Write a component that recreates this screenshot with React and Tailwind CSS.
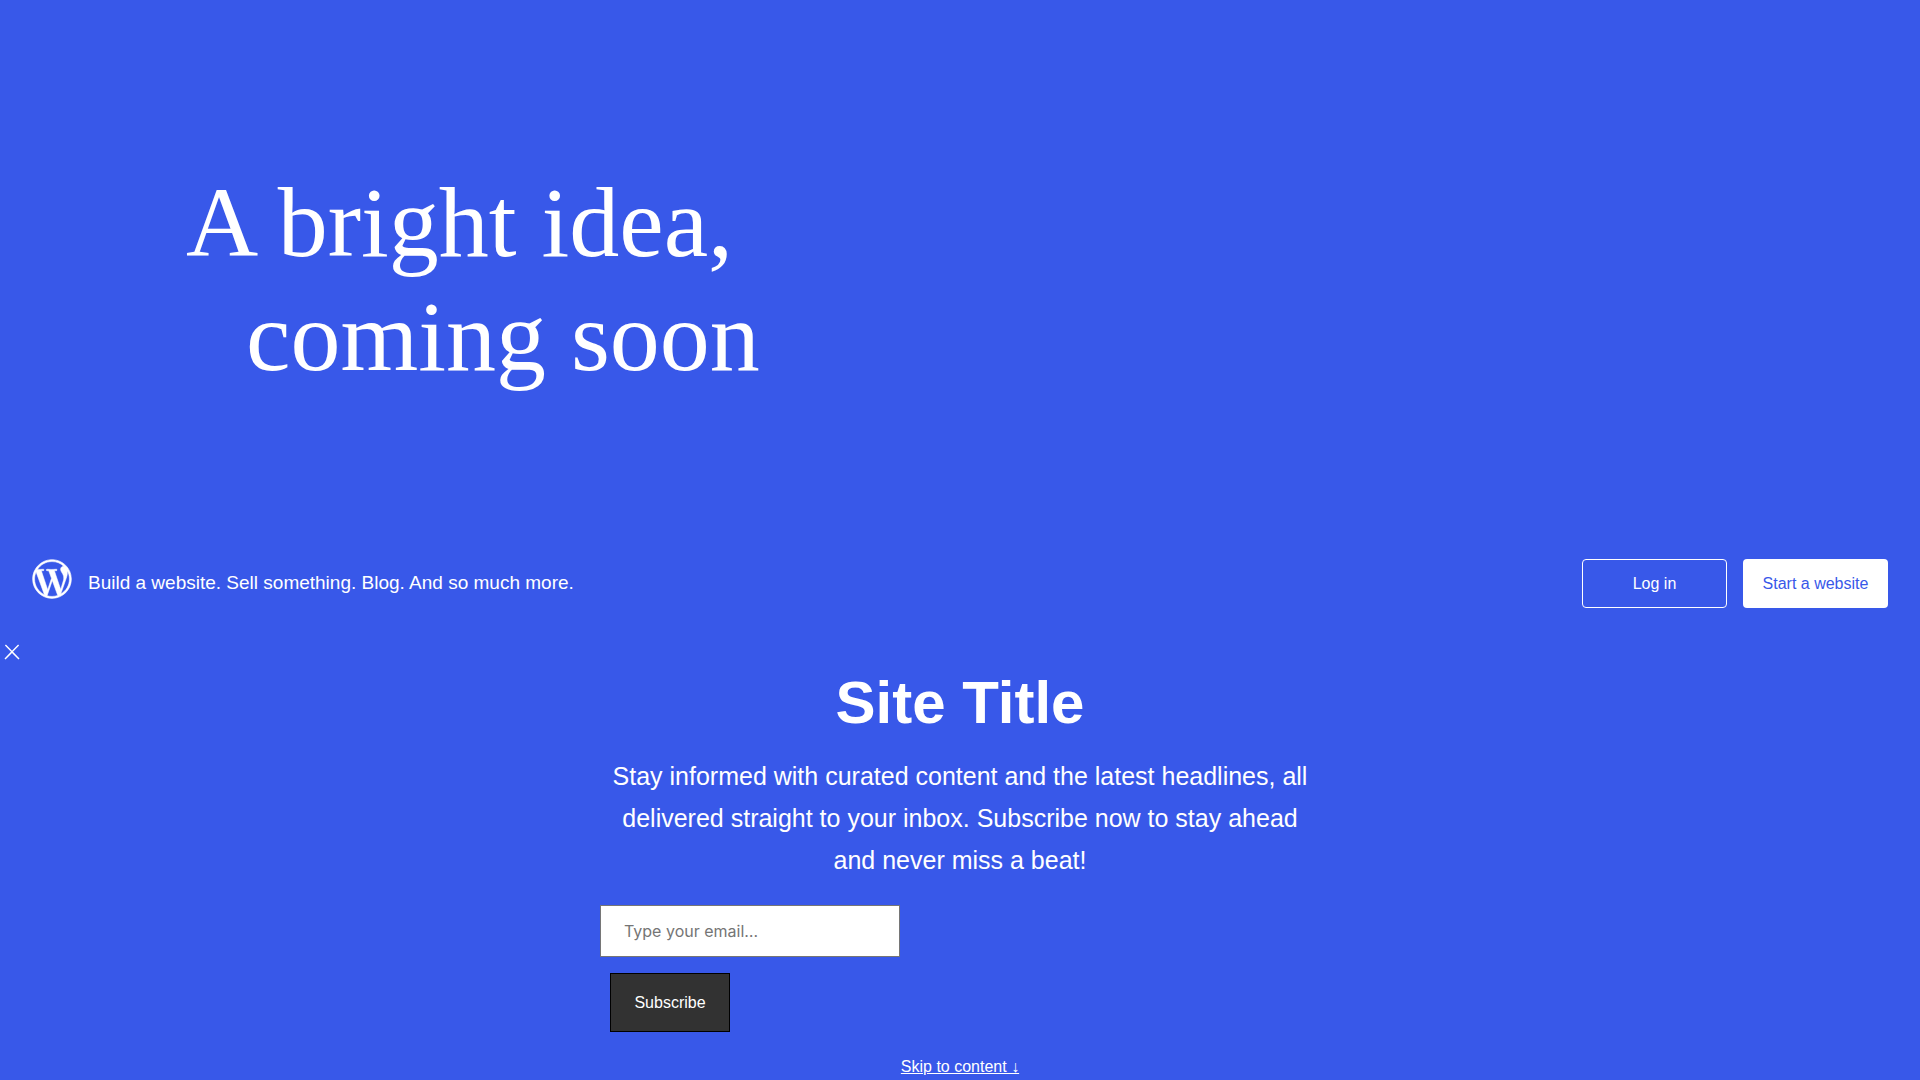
import React, { useState } from 'react'
import { FaWordpressSimple } from 'react-icons/fa'

const Hero = () => (
  <section className="px-[186px] pt-[166px] pb-[165px]">
    <h1 className="font-['Liberation_Serif',serif] text-[100px] leading-[114px]">
      A bright idea,
      <span className="block pl-[60px]">coming soon</span>
    </h1>
  </section>
)

const Banner = () => (
  <section className="flex items-start justify-between gap-4 px-8 pb-8">
    <div className="flex items-center gap-4">
      <a href="#home" aria-label="WordPress.com">
        <FaWordpressSimple size={40} strokeWidth={7} />
      </a>
      <p className="pt-2 text-[19px] leading-6">
        Build a website. Sell something. Blog. And so much more.
      </p>
    </div>

    <div className="flex shrink-0 gap-4">
      <a
        href="#login"
        className="flex h-[49px] w-[145px] items-center justify-center rounded border border-white text-base"
      >
        Log in
      </a>
      <a
        href="#start"
        className="flex h-[49px] w-[145px] items-center justify-center rounded bg-white text-base text-[#3858e9]"
      >
        Start a website
      </a>
    </div>
  </section>
)

const SubscribeForm = () => {
  const [email, setEmail] = useState('')

  return (
    <form className="mt-6 flex flex-col items-start gap-4" onSubmit={(e) => e.preventDefault()}>
      <input
        type="email"
        aria-label="Type your email…"
        placeholder="Type your email…"
        value={email}
        onChange={(e) => setEmail(e.target.value)}
        className="h-[52px] w-[300px] border border-[#767676] bg-white px-[23px] font-[Inter,sans-serif] text-base text-black placeholder:text-[#757575]"
      />
      <button
        type="submit"
        className="ml-[10px] h-[59px] w-[120px] border border-black bg-[#323232] text-base text-white"
      >
        Subscribe
      </button>
    </form>
  )
}

const App = () => {
  return (
    <div className="min-h-screen bg-[#3858e9] font-['Liberation_Sans',sans-serif] text-white">
      <Hero />
      <Banner />

      <button type="button" aria-label="Close" className="block">
        <svg width="24" height="24" viewBox="0 0 24 24" fill="currentColor">
          <path d="M13 11.8l6.1-6.3-1-1-6.1 6.2-6.1-6.2-1 1 6.1 6.3-6.5 6.7 1 1 6.5-6.6 6.5 6.6 1-1z" />
        </svg>
      </button>

      <main className="mx-auto max-w-[720px]">
        <h2 className="text-center text-[60px] leading-[78px] font-bold">Site Title</h2>
        <p className="mt-[13px] text-center text-[25px] leading-[42px]">
          Stay informed with curated content and the latest headlines, all delivered straight to your
          inbox. Subscribe now to stay ahead and never miss a beat!
        </p>
        <SubscribeForm />
        <p className="mt-[23px] text-center text-base leading-6">
          <a href="#content" className="underline">
            Skip to content ↓
          </a>
        </p>
      </main>
    </div>
  )
}

export default App
